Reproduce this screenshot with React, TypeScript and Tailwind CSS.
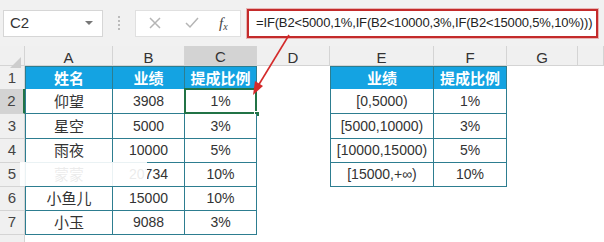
import React from 'react';

const colLetters = ['A', 'B', 'C', 'D', 'E', 'F', 'G', ''];
const gridCols = 'grid grid-cols-[25px_88px_72px_72px_73px_104px_73px_71px_1fr]';
const rowHeights = ['h-[23px]', 'h-[25px]', 'h-[25px]', 'h-[24px]', 'h-[24px]', 'h-[24px]', 'h-[24px]', 'h-[24px]'];

const leftTable = [
  ['姓名', '业绩', '提成比例'],
  ['仰望', '3908', '1%'],
  ['星空', '5000', '3%'],
  ['雨夜', '10000', '5%'],
  ['蒙蒙', '20734', '10%'],
  ['小鱼儿', '15000', '10%'],
  ['小玉', '9088', '3%'],
];

const rightTable = [
  ['业绩', '提成比例'],
  ['[0,5000)', '1%'],
  ['[5000,10000)', '3%'],
  ['[10000,15000)', '5%'],
  ['[15000,+∞)', '10%'],
];

const cjk = "font-['Noto_Sans_CJK_SC','Noto_Sans',sans-serif]";
const latin = "font-['Liberation_Sans',Arial,sans-serif]";

function Cell({ r, c }: { r: number; c: number }) {
  // left table: cols 0..2, rows 0..6 ; right table: cols 4..5, rows 0..4
  let text: string | null = null;
  let isTable = false;
  let first = false;
  if (c <= 2 && r <= 6) {
    text = leftTable[r][c];
    isTable = true;
    first = c === 0;
  } else if ((c === 4 || c === 5) && r <= 4) {
    text = rightTable[r][c - 4];
    isTable = true;
    first = c === 4;
  }
  if (!isTable) return <div className="bg-white" />;

  const header = r === 0;
  const isCjk = /[\u4e00-\u9fff]/.test(text ?? '');
  const selected = r === 1 && c === 2;

  return (
    <div
      className={`relative flex items-center justify-center border-[#2d7d90] border-r border-b ${first ? 'border-l' : ''} ${
        header ? 'border-t bg-[#14a3e2] text-white font-bold text-[15px]' : 'bg-white text-[#333] text-[14px]'
      } ${isCjk ? cjk : latin}`}
    >
      <span className={isCjk && !header ? 'text-[15px]' : ''}>{text}</span>
      {selected && (
        <>
          <div className="absolute -left-px -top-px -right-px -bottom-px border-2 border-[#217346]" />
          <div className="absolute -right-[4px] -bottom-[4px] w-[6px] h-[6px] bg-[#217346] border border-white" />
        </>
      )}
    </div>
  );
}

export default function App() {
  return (
    <div className="relative w-[604px] h-[242px] overflow-hidden bg-white select-none">
      {/* toolbar */}
      <div className="h-[46px] bg-[#f1f1f1] flex items-center pl-[3px]">
        <div className="w-[100px] h-[27px] bg-white border border-[#d6d6d6] flex items-center justify-between px-[6px]">
          <span className={`${latin} text-[15px] text-[#333]`}>C2</span>
          <span className="w-0 h-0 border-l-[4px] border-r-[4px] border-t-[4px] border-l-transparent border-r-transparent border-t-[#777] mr-[3px]" />
        </div>
        <div className="w-[32px] flex flex-col items-center gap-[2px]">
          <span className="w-[2px] h-[2px] bg-[#bbb]" />
          <span className="w-[2px] h-[2px] bg-[#bbb]" />
          <span className="w-[2px] h-[2px] bg-[#bbb]" />
          <span className="w-[2px] h-[2px] bg-[#bbb]" />
        </div>
        <div className="w-[106px] h-[27px] bg-white border border-[#e0e0e0] flex items-center">
          <svg width="12" height="12" viewBox="0 0 12 12" className="ml-[13px]">
            <path d="M1 1 L11 11 M11 1 L1 11" stroke="#b5b5b5" strokeWidth="1.5" />
          </svg>
          <svg width="14" height="12" viewBox="0 0 14 12" className="ml-[24px]">
            <path d="M1 6 L5 10 L13 1" stroke="#b5b5b5" strokeWidth="1.5" fill="none" />
          </svg>
          <span className="ml-[20px] font-['Liberation_Serif',serif] italic text-[15px] text-[#444]">
            f<sub className="text-[10px]">x</sub>
          </span>
        </div>
        <div className="ml-[6px] w-[351px] h-[29px] bg-white border-2 border-[#c42b2b] flex items-center pl-[7px] overflow-hidden shadow-[0_0_0_1px_#e8b4b4]">
          <span className={`${latin} text-[13px] tracking-[-0.15px] text-[#222] whitespace-nowrap`}>
            =IF(B2&lt;5000,1%,IF(B2&lt;10000,3%,IF(B2&lt;15000,5%,10%)))
          </span>
        </div>
      </div>

      {/* column headers */}
      <div className={`${gridCols} h-[20px] bg-[#f0f0f0] border-b border-[#d4d4d4]`}>
        <div className="relative border-r border-[#d4d4d4]">
          <div className="absolute right-[3px] bottom-[3px] w-0 h-0 [border-bottom:11px_solid_#cdcdcd] [border-left:11px_solid_transparent]" />
        </div>
        {colLetters.map((l, i) => (
          <div
            key={i}
            className={`flex items-center justify-center border-r border-[#d4d4d4] ${latin} text-[15px] text-[#333] ${
              i === 2 ? 'bg-[#d3d3d3] border-b-2 border-b-[#217346]' : ''
            }`}
          >
            {l}
          </div>
        ))}
      </div>

      {/* rows */}
      {rowHeights.map((h, r) => (
        <div key={r} className={`${gridCols} ${h}`}>
          <div
            className={`flex items-center justify-center border-b border-r border-[#d4d4d4] ${latin} text-[15px] text-[#444] ${
              r === 1 ? 'bg-[#d3d3d3] border-r-2 border-r-[#217346]' : 'bg-[#f0f0f0]'
            }`}
          >
            {r < 7 ? r + 1 : ''}
          </div>
          {colLetters.map((_, c) => (
            <Cell key={c} r={r} c={c} />
          ))}
        </div>
      ))}

      {/* smudge over row 5 */}
      <div className="absolute left-[20px] top-[162px] w-[127px] h-[24px] bg-white/90" />

      {/* red arrow */}
      <svg className="absolute left-0 top-0" width="604" height="242">
        <line x1="289" y1="35" x2="258" y2="86" stroke="#d42a2a" strokeWidth="1.6" />
        <polygon points="253,95 255,81 263,86" fill="#d42a2a" />
      </svg>
    </div>
  );
}
